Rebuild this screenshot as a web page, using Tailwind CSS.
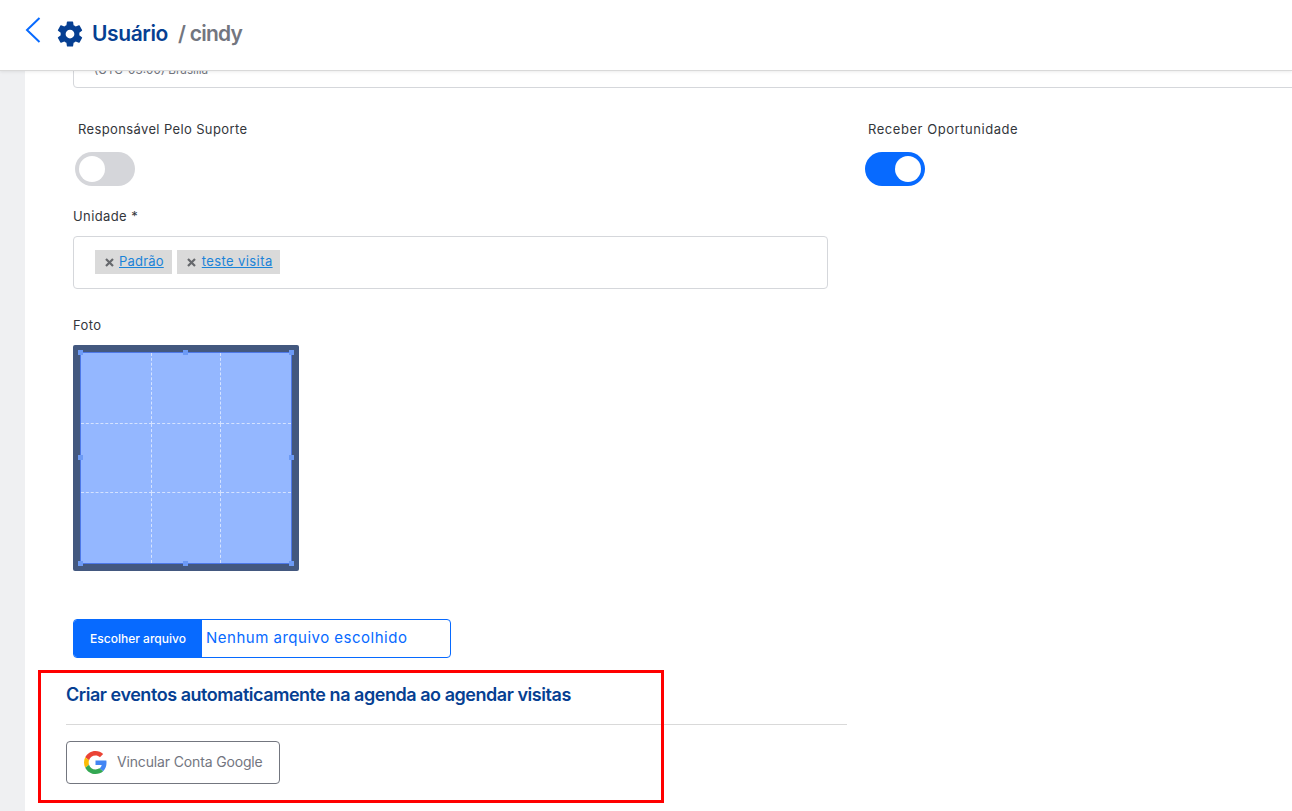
<!DOCTYPE html>
<html lang="pt-BR">
<head>
    <meta charset="UTF-8">
    <meta name="viewport" content="width=device-width, initial-scale=1.0">
    <title>Usuário</title>
    <script src="https://cdn.jsdelivr.net/npm/@tailwindcss/browser@4"></script>
</head>
<body class="relative h-[811px] w-[1292px] overflow-hidden bg-white font-['Inter',sans-serif]">

    <!-- header -->
    <header class="relative z-10 flex h-[71px] items-center border-b border-[#d9d9d9] bg-white shadow-[0_1px_3px_rgba(0,0,0,0.08)]">
        <svg class="ml-[24px] mt-[-11px] h-[28px] w-[18px]" viewBox="0 0 18 28" fill="none" stroke="#076aff" stroke-width="2">
            <path d="M15.500 2 L3 14 L15.500 26"/>
        </svg>
        <svg class="ml-[13px] mt-[-3px] h-[30px] w-[30px]" viewBox="0 0 24 24" fill="#063f92">
            <path d="M19.430 12.980c.04-.32.07-.64.07-.98s-.03-.66-.07-.98l2.110-1.650c.19-.15.240-.42.120-.64l-2-3.460c-.12-.22-.39-.30-.61-.22l-2.490 1c-.52-.40-1.080-.73-1.690-.98l-.38-2.650A.49.49 0 0 0 14 2h-4c-.25 0-.46.18-.49.420l-.38 2.650c-.61.25-1.170.59-1.690.98l-2.490-1c-.23-.09-.49 0-.61.22l-2 3.460c-.13.220-.07.490.12.640l2.110 1.650c-.04.320-.07.650-.07.980s.03.660.07.980l-2.110 1.650c-.19.150-.24.420-.12.640l2 3.460c.12.220.39.300.61.220l2.490-1c.52.400 1.080.730 1.690.980l.38 2.650c.03.240.24.420.49.420h4c.25 0 .46-.18.490-.42l.38-2.650c.61-.25 1.170-.59 1.690-.98l2.490 1c.23.090.49 0 .61-.22l2-3.460c.12-.22.07-.49-.12-.64l-2.110-1.650zM12 15.500a3.500 3.500 0 1 1 0-7 3.500 3.500 0 0 1 0 7z"/>
        </svg>
        <span class="ml-[7px] mt-[-3px] text-[21px] font-semibold tracking-[-0.4px] text-[#063f92]">Usuário</span>
        <span class="ml-[10px] mt-[-3px] text-[21px] font-semibold tracking-[-0.75px] text-[#73767f]">/ cindy</span>
    </header>

    <div class="flex h-[740px]">
        <div class="w-[25px] shrink-0 bg-[#eff0f2]"></div>

        <main class="min-w-0 flex-1 overflow-hidden pl-[41px]">
            <!-- top of the form, scrolled under the header -->
            <div class="-mr-[20px] ml-[7px] -mt-[21px] flex h-[38px] items-center rounded-[4px] border border-[#d5d7db] pl-[20px] pt-[3px] text-[11.700px] text-[#73767f]">(UTC-03:00) Brasília</div>

            <div class="ml-[7px] mt-[31px] grid grid-cols-[792px_1fr]">
                <div>
                    <p class="ml-[5px] text-[13px] leading-[20px] tracking-[0.37px] text-[#33363b]">Responsável Pelo Suporte</p>
                    <div class="ml-[2px] mt-[13px] flex h-[34px] w-[60px] items-center rounded-full bg-[#d5d6da] pl-[4px]">
                        <span class="h-[26px] w-[26px] rounded-full bg-white"></span>
                    </div>
                </div>
                <div>
                    <p class="ml-[3px] text-[13px] leading-[20px] tracking-[0.55px] text-[#33363b]">Receber Oportunidade</p>
                    <div class="mt-[13px] flex h-[34px] w-[60px] items-center justify-end rounded-full bg-[#076aff] pr-[4px]">
                        <span class="h-[26px] w-[26px] rounded-full bg-white"></span>
                    </div>
                </div>
            </div>

            <p class="ml-[7px] mt-[20px] text-[13px] leading-[20px] tracking-[0.4px] text-[#33363b]">Unidade *</p>
            <div class="ml-[7px] mt-[10px] flex h-[53px] w-[755px] items-center gap-[5px] rounded-[4px] border border-[#d5d7db] pb-[2px] pl-[21px]">
                <span class="flex h-[24px] items-center bg-[#dadada] pl-[10px] pr-[8px] text-[13px] tracking-[0.2px]">
                    <svg class="mr-[5px] mt-[2px] h-[9px] w-[9px]" viewBox="0 0 9 9" stroke="#66686c" stroke-width="2.200"><path d="M1 1 L8 8 M8 1 L1 8"/></svg>
                    <a class="text-[#1b83d8] underline">Padrão</a>
                </span>
                <span class="flex h-[24px] items-center bg-[#dadada] pl-[10px] pr-[7px] text-[13px] tracking-[0.4px]">
                    <svg class="mr-[6px] mt-[2px] h-[9px] w-[9px]" viewBox="0 0 9 9" stroke="#66686c" stroke-width="2.200"><path d="M1 1 L8 8 M8 1 L1 8"/></svg>
                    <a class="text-[#1b83d8] underline">teste visita</a>
                </span>
            </div>

            <p class="ml-[7px] mt-[26px] text-[13px] leading-[20px] tracking-[0.4px] text-[#33363b]">Foto</p>

            <!-- cropper -->
            <div class="relative ml-[7px] mt-[10px] h-[226px] w-[226px] rounded-[2px] bg-[#43587f] p-[7px]">
                <div class="relative grid h-[212px] w-[212px] grid-cols-[71px_69px_1fr] grid-rows-[71px_69px_1fr] border border-[#4d78e8] bg-[#94b7ff]">
                    <div class="border-r border-b border-dashed border-white/60"></div>
                    <div class="border-r border-b border-dashed border-white/60"></div>
                    <div class="border-b border-dashed border-white/60"></div>
                    <div class="border-r border-b border-dashed border-white/60"></div>
                    <div class="border-r border-b border-dashed border-white/60"></div>
                    <div class="border-b border-dashed border-white/60"></div>
                    <div class="border-r border-dashed border-white/60"></div>
                    <div class="border-r border-dashed border-white/60"></div>
                    <div></div>
                    <span class="absolute -left-[3px] -top-[3px] h-[5px] w-[5px] bg-[#6c9af5]"></span>
                    <span class="absolute left-[102px] -top-[3px] h-[5px] w-[5px] bg-[#6c9af5]"></span>
                    <span class="absolute -right-[3px] -top-[3px] h-[5px] w-[5px] bg-[#6c9af5]"></span>
                    <span class="absolute -left-[3px] top-[102px] h-[5px] w-[5px] bg-[#6c9af5]"></span>
                    <span class="absolute -right-[3px] top-[102px] h-[5px] w-[5px] bg-[#6c9af5]"></span>
                    <span class="absolute -bottom-[3px] -left-[3px] h-[5px] w-[5px] bg-[#6c9af5]"></span>
                    <span class="absolute -bottom-[3px] left-[102px] h-[5px] w-[5px] bg-[#6c9af5]"></span>
                    <span class="absolute -bottom-[3px] -right-[3px] h-[5px] w-[5px] bg-[#6c9af5]"></span>
                </div>
            </div>

            <!-- file input -->
            <div class="ml-[7px] mt-[48px] flex h-[39px] w-[378px] items-stretch overflow-hidden rounded-[4px] border border-[#076aff]">
                <span class="flex w-[128px] items-center justify-center bg-[#076aff] text-[12px] font-medium tracking-[0px] text-white">Escolher arquivo</span>
                <span class="flex items-center pl-[4px] text-[15px] tracking-[0.5px] text-[#076aff]">Nenhum arquivo escolhido</span>
            </div>

            <!-- google -->
            <h2 class="mt-[25px] text-[18px] leading-[24px] font-semibold tracking-[-0.46px] text-[#063f92]">Criar eventos automaticamente na agenda ao agendar visitas</h2>
            <div class="mt-[17px] h-px w-[781px] bg-[#d9d9d9]"></div>
            <button class="mt-[16px] flex h-[43px] w-[214px] items-center rounded-[4px] border border-[#73767f] pl-[17px] text-[14px] tracking-[-0.15px] text-[#73767f]">
                <svg class="mr-[10px] h-[23px] w-[23px]" viewBox="0 0 48 48">
                    <path fill="#EA4335" d="M24 9.500c3.540 0 6.710 1.220 9.210 3.600l6.850-6.850C35.900 2.380 30.470 0 24 0 14.620 0 6.510 5.380 2.560 13.220l7.980 6.190C12.430 13.720 17.740 9.500 24 9.500z"/>
                    <path fill="#4285F4" d="M46.980 24.550c0-1.570-.15-3.090-.38-4.550H24v9.020h12.940c-.58 2.960-2.260 5.480-4.780 7.180l7.730 6c4.510-4.180 7.090-10.360 7.090-17.650z"/>
                    <path fill="#FBBC05" d="M10.530 28.590c-.48-1.450-.76-2.990-.76-4.590s.27-3.140.76-4.590l-7.980-6.190C.92 16.460 0 20.120 0 24c0 3.880.92 7.540 2.560 10.780l7.970-6.190z"/>
                    <path fill="#34A853" d="M24 48c6.480 0 11.930-2.130 15.890-5.810l-7.730-6c-2.150 1.450-4.920 2.300-8.160 2.300-6.260 0-11.570-4.220-13.470-9.910l-7.980 6.190C6.510 42.620 14.620 48 24 48z"/>
                </svg>
                <span class="pb-[2px]">Vincular Conta Google</span>
            </button>
        </main>
    </div>

    <!-- red annotation drawn over the screenshot -->
    <div class="pointer-events-none absolute left-[38px] top-[670px] h-[133px] w-[626px] border-[3px] border-[#ff0000]"></div>
</body>
</html>
